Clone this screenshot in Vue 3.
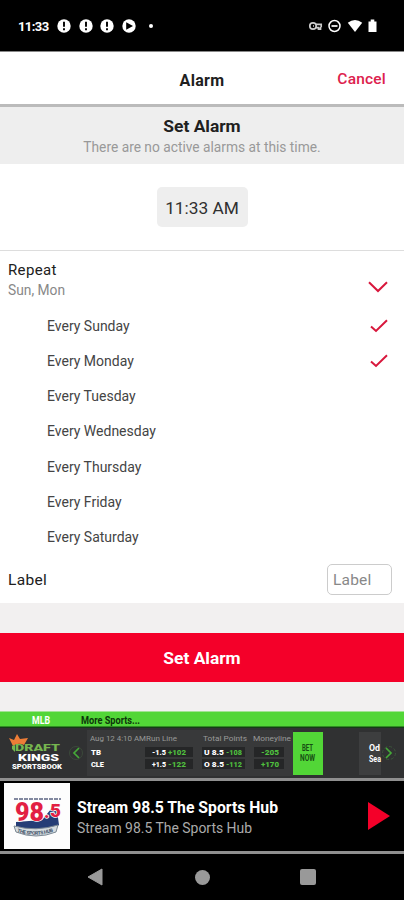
<template>
  <div class="alarm-screen">
    <div class="status-bar">
      <span class="clock">11:33</span>
      <svg v-for="n in 3" :key="n" class="notice" viewBox="0 0 14 14">
        <circle cx="7" cy="7" r="6.7" fill="#fff" />
        <path d="M7 2.8v5M7 9.3v2" stroke="#000" stroke-width="1.9" />
      </svg>
      <svg class="notice" viewBox="0 0 14 14">
        <circle cx="7" cy="7" r="6.7" fill="#fff" />
        <path d="M4.2 3.2L11 7L4.2 10.8Z" fill="#000" />
      </svg>
      <span class="dot"></span>
      <svg class="system-icons" width="72" height="16" viewBox="0 0 72 16">
        <g fill="none" stroke="#ccc" stroke-width="1.7">
          <circle cx="5" cy="8" r="3.2" />
          <path d="M5 8h1M8 6.3h5.2v3M8 9.6h2.5v1.6h2V9" />
        </g>
        <circle cx="26.5" cy="8" r="5.5" fill="none" stroke="#fff" stroke-width="1.5" />
        <path d="M23.5 8h6" stroke="#fff" stroke-width="1.7" />
        <path d="M39.8 4.7Q47 -.8 54.2 4.7L47 14Z" fill="#fff" />
        <path d="M60.5 3.5h2.2V1.5h3.6v2h2.2V14h-8z" fill="#fff" />
      </svg>
    </div>

    <header class="title-bar">
      <h1>Alarm</h1>
      <button type="button" class="btn-cancel">Cancel</button>
    </header>

    <section class="summary">
      <h2>Set Alarm</h2>
      <p>There are no active alarms at this time.</p>
    </section>

    <section class="time-row">
      <button type="button" class="time">11:33 AM</button>
    </section>

    <section class="repeat">
      <div>
        <div class="repeat-title">Repeat</div>
        <div class="repeat-days">{{ repeatText }}</div>
      </div>
      <svg class="chevron" width="20" height="12" viewBox="0 0 20 12">
        <path d="M1 1.2L10 10L19 1.2" fill="none" stroke="#d8173c" stroke-width="2" />
      </svg>
    </section>

    <ul class="days">
      <li v-for="day in days" :key="day.name" @click="day.active = !day.active">
        <span>Every {{ day.name }}</span>
        <svg v-if="day.active" width="18" height="14" viewBox="0 0 18 14">
          <path d="M1 7.5L6 12L17 1.2" fill="none" stroke="#d8173c" stroke-width="2" />
        </svg>
      </li>
    </ul>

    <section class="label-row">
      <span>Label</span>
      <input v-model="label" type="text" placeholder="Label" />
    </section>

    <div class="submit">
      <button type="button" class="btn-set">Set Alarm</button>
    </div>

    <div class="odds">
      <svg width="404" height="67" viewBox="0 0 404 67">
        <rect width="404" height="15.5" y=".5" fill="#52d637" />
        <rect y="15.5" width="404" height="1.5" fill="#123d14" />
        <rect y="17" width="404" height="50" fill="#303132" />
        <rect x="87" y="19" width="206" height="46" fill="#38393a" />
        <rect x="359" y="21" width="22" height="43" fill="#3d3e3f" />
        <g class="league">
          <text x="32" y="13" textLength="18" lengthAdjust="spacingAndGlyphs" fill="#fff">MLB</text>
          <text x="81" y="13" textLength="59" lengthAdjust="spacingAndGlyphs" fill="#0c350a">More Sports...</text>
        </g>

        <path d="M9 27L14 29L17 23L20 28L28 27L24 34Q18 31 13 35Z" fill="#ed7d37" />
        <path d="M12 35L15 34V41L12 38Z" fill="#76b64f" />
        <g class="brand" fill="#fff">
          <text class="draft" x="15" y="40" textLength="45" lengthAdjust="spacingAndGlyphs" fill="#76b64f">DRAFT</text>
          <text class="kings" x="18" y="50" textLength="41" lengthAdjust="spacingAndGlyphs">KINGS</text>
          <text class="small" x="12" y="58" textLength="50" lengthAdjust="spacingAndGlyphs">SPORTSBOOK</text>
        </g>

        <g fill="none" stroke="#45a938" stroke-width="1.7">
          <circle cx="76" cy="42" r="6.5" stroke="#3b493a" stroke-width="1" />
          <path d="M79 37L74 42L79 47" />
          <circle cx="389" cy="42" r="6.5" stroke="#3b553a" stroke-width="1" stroke-dasharray="3 2" />
          <path d="M386 37L391 42L386 47" />
        </g>

        <g class="heading" fill="#999">
          <text x="90" y="30" textLength="56" lengthAdjust="spacingAndGlyphs">Aug 12 4:10 AM</text>
          <text x="146" y="30" textLength="31" lengthAdjust="spacingAndGlyphs">Run Line</text>
          <text x="203" y="30" textLength="44" lengthAdjust="spacingAndGlyphs">Total Points</text>
          <text x="253" y="30" textLength="38" lengthAdjust="spacingAndGlyphs">Moneyline</text>
        </g>

        <g v-for="(line, i) in lines" :key="line.team" class="prices">
          <rect x="145" :y="36 + i * 12" width="48" height="10" fill="#252627" />
          <rect x="202" :y="36 + i * 12" width="43" height="10" fill="#252627" />
          <rect x="254" :y="36 + i * 12" width="30" height="10" fill="#252627" />
          <text
            v-for="cell in line.cells"
            :key="cell.x"
            :x="cell.x"
            :y="43.5 + i * 12"
            :textLength="cell.width"
            lengthAdjust="spacingAndGlyphs"
            :fill="cell.odds ? '#4fbd3e' : '#fff'"
          >{{ cell.text }}</text>
        </g>

        <rect x="293" y="21" width="30" height="43" fill="#52d637" />
        <g class="bet" fill="#164d13">
          <text x="302" y="40" textLength="11" lengthAdjust="spacingAndGlyphs">BET</text>
          <text x="300" y="49.5" textLength="15" lengthAdjust="spacingAndGlyphs">NOW</text>
        </g>
        <g class="next" fill="#fff">
          <text x="369" y="40" textLength="11" lengthAdjust="spacingAndGlyphs">Od</text>
          <text x="369" y="50.5" textLength="12" lengthAdjust="spacingAndGlyphs">Sea</text>
        </g>
      </svg>
    </div>

    <div class="player">
      <div class="cover">
        <svg width="66" height="66" viewBox="0 0 66 66">
          <path d="M10 16H57" stroke="#8389a0" stroke-width="2" stroke-dasharray="4 1" />
          <path d="M12 39L38 37L52 20L55 42L49 46Q30 50 12 43Z" fill="#253d76" />
          <text class="station" x="11" y="38" textLength="29" lengthAdjust="spacingAndGlyphs">98</text>
          <text class="station five" x="40" y="35">.</text>
          <text class="station five" x="46" y="34" textLength="11" lengthAdjust="spacingAndGlyphs">5</text>
          <path d="M10 43Q32 49 54 42L52 49Q32 57 12 49Z" fill="#d6dce0" stroke="#7c8994" />
          <path id="banner" d="M13 49Q32 55 51 48" fill="none" />
          <text class="ribbon"><textPath href="#banner" textLength="37">THE SPORTS HUB</textPath></text>
        </svg>
      </div>
      <div class="track">
        <div class="track-title">Stream 98.5 The Sports Hub</div>
        <div class="track-subtitle">Stream 98.5 The Sports Hub</div>
      </div>
      <svg class="play" width="22" height="28" viewBox="0 0 22 28">
        <path d="M0 0L22 14L0 28Z" fill="#f40029" />
      </svg>
    </div>

    <nav class="system-nav">
      <svg width="16" height="18" viewBox="0 0 16 18">
        <path d="M15 1V17L1 9Z" fill="#999" stroke="#999" stroke-linejoin="round" />
      </svg>
      <span class="home"></span>
      <span class="recent"></span>
    </nav>
  </div>
</template>

<script setup>
import { computed, ref } from "vue";

const label = ref("");

const days = ref([
  { name: "Sunday", active: true },
  { name: "Monday", active: true },
  { name: "Tuesday", active: false },
  { name: "Wednesday", active: false },
  { name: "Thursday", active: false },
  { name: "Friday", active: false },
  { name: "Saturday", active: false }
]);

const repeatText = computed(() =>
  days.value.filter(d => d.active).map(d => d.name.slice(0, 3)).join(", ")
);

const lines = [
  gameLine("TB", 10, "-1.5", "+102", "U 8.5", "-108", "-205"),
  gameLine("CLE", 13, "+1.5", "-122", "O 8.5", "-112", "+170")
];

function gameLine(team, teamWidth, spread, spreadOdds, total, totalOdds, money) {
  return {
    team,
    cells: [
      { x: 91, width: teamWidth, text: team },
      { x: 152, width: 14, text: spread },
      { x: 168, width: 18, text: spreadOdds, odds: true },
      { x: 204, width: 20, text: total },
      { x: 226, width: 16, text: totalOdds, odds: true },
      { x: 261, width: 18, text: money, odds: true }
    ]
  };
}
</script>

<style>
body {
  margin: 0;
}
</style>

<style scoped>
.alarm-screen {
  width: 404px;
  height: 900px;
  overflow: hidden;
  display: flex;
  flex-direction: column;
  background: #f2f0f0;
  color: #202020;
  font-family: Roboto, "Liberation Sans", sans-serif;
}

.alarm-screen > * {
  box-sizing: border-box;
  flex: none;
}

h1,
h2,
p,
ul {
  margin: 0;
  padding: 0;
}

button {
  font-family: inherit;
  border: none;
  cursor: pointer;
}

.status-bar {
  height: 52px;
  display: flex;
  align-items: center;
  background: #000;
  border-bottom: 1px solid #888;
  padding: 1px 24px 0 18px;
  color: #fff;
}

.clock {
  width: 39px;
  font-size: 13px;
  font-weight: 700;
  letter-spacing: -.6px;
}

.notice {
  width: 14px;
  height: 14px;
  margin-right: 7.7px;
}

.dot {
  width: 4px;
  height: 4px;
  margin-left: 5px;
  border-radius: 50%;
  background: #fff;
}

.system-icons {
  margin-left: auto;
}

.title-bar {
  height: 55px;
  display: grid;
  grid-template-columns: 1fr auto 1fr;
  align-items: center;
  background: #fff;
  border-bottom: 3px solid #bbb;
  padding: 2px 18px 0;
}

.title-bar h1 {
  grid-column: 2;
  margin-top: 2px;
  font-size: 16px;
  font-weight: 700;
  letter-spacing: .3px;
}

.btn-cancel {
  justify-self: end;
  padding: 0;
  background: none;
  color: #dd214d;
  font-size: 15.5px;
  font-weight: 500;
  letter-spacing: .2px;
}

.summary {
  height: 57px;
  padding-top: 9px;
  background: #eee;
  text-align: center;
}

.summary h2 {
  font-size: 17.4px;
  line-height: 20px;
  font-weight: 700;
}

.summary p {
  margin-top: 2px;
  color: #999;
  font-size: 13.75px;
  line-height: 18px;
}

.time-row {
  height: 87px;
  display: flex;
  justify-content: center;
  align-items: center;
  background: #fff;
  border-bottom: 1px solid #ddd;
}

.time {
  width: 91px;
  height: 40px;
  padding: 2px 0 0;
  border-radius: 5px;
  background: #eee;
  color: #303030;
  font-size: 17.3px;
}

.repeat {
  height: 57px;
  display: flex;
  justify-content: space-between;
  padding: 9px 16px 0 8px;
  background: #fff;
}

.repeat-title {
  font-size: 15px;
  line-height: 20px;
  letter-spacing: .35px;
}

.repeat-days {
  color: #888;
  font-size: 13.8px;
  line-height: 20px;
}

.chevron {
  margin-top: 21px;
}

.days {
  height: 247px;
  display: grid;
  grid-template-rows: repeat(7, 1fr);
  background: #fff;
  list-style: none;
}

.days li {
  display: flex;
  justify-content: space-between;
  align-items: center;
  padding: 0 16px 0 47px;
  color: #444;
  font-size: 14px;
}

.label-row {
  height: 48px;
  display: flex;
  justify-content: space-between;
  align-items: center;
  padding: 0 12px 0 8px;
  background: #fff;
  font-size: 15.5px;
  letter-spacing: .3px;
}

.label-row span {
  padding-top: 2px;
}

.label-row input {
  box-sizing: border-box;
  width: 65px;
  height: 31px;
  padding: 2px 4px 0 5px;
  border: 1px solid #ccc;
  border-radius: 5px;
  font-family: inherit;
  font-size: 15.5px;
  letter-spacing: .2px;
}

.label-row input::placeholder {
  color: #888;
}

.submit {
  height: 108px;
  padding-top: 30px;
}

.btn-set {
  width: 100%;
  height: 49px;
  padding: 1px 0 0;
  background: #f40029;
  color: #fff;
  font-size: 17.4px;
  font-weight: 700;
}

.odds {
  height: 67px;
}

.odds svg {
  display: block;
}

.league {
  font-size: 11px;
  font-weight: 700;
}

.brand {
  font-weight: 900;
}

.brand .draft {
  font-size: 8.5px;
}

.brand .kings {
  font-size: 9px;
}

.brand .small {
  font-size: 6.5px;
}

.heading {
  font-size: 8px;
}

.prices {
  font-size: 8px;
  font-weight: 900;
}

.bet {
  font-size: 8.5px;
  font-weight: 700;
}

.next {
  font-size: 9px;
  font-weight: 700;
}

.player {
  height: 76px;
  display: flex;
  align-items: center;
  padding: 0 14px 0 4px;
  border-top: 3px solid #8f8f8f;
  border-bottom: 3px solid #8f8f8f;
  background: #000;
}

.cover {
  width: 66px;
  height: 66px;
  background: #fdfdfd;
}

.cover svg {
  display: block;
}

.station {
  fill: #e21f43;
  stroke: #fff;
  stroke-width: 1.5px;
  paint-order: stroke;
  font-size: 26px;
  font-weight: 900;
}

.five {
  font-size: 18px;
}

.ribbon {
  fill: #405269;
  font-size: 5px;
  font-weight: 700;
}

.track {
  flex: 1;
  margin-left: 7px;
  padding-top: 3px;
}

.track-title {
  color: #fff;
  font-size: 15.75px;
  line-height: 20px;
  font-weight: 700;
}

.track-subtitle {
  color: #aaa;
  font-size: 13.95px;
  line-height: 20px;
}

.system-nav {
  height: 46px;
  display: flex;
  align-items: center;
  padding-left: 87px;
  background: #000;
}

.home {
  width: 15px;
  height: 15px;
  margin-left: 92px;
  border-radius: 50%;
  background: #999;
}

.recent {
  width: 16px;
  height: 16px;
  margin-left: 90px;
  border-radius: 2px;
  background: #999;
}
</style>
